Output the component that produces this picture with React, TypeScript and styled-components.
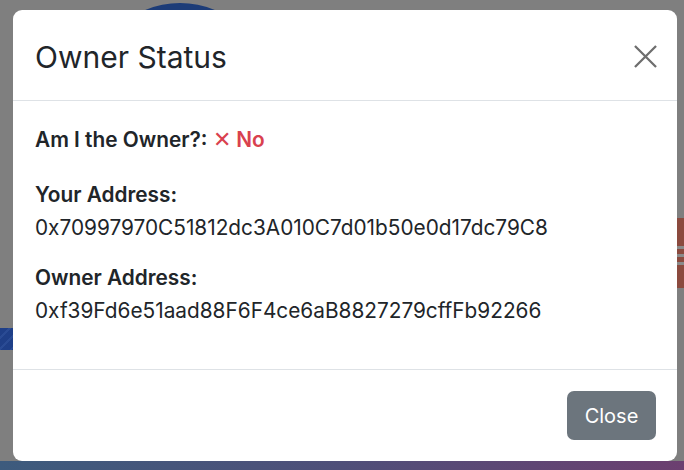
import React from "react";
import styled, { createGlobalStyle } from "styled-components";

const GlobalStyle = createGlobalStyle`
  html, body { margin: 0; padding: 0; }
  body {
    width: 684px;
    height: 470px;
    overflow: hidden;
    background: #7f7f7f;
    font-family: Inter, "Noto Sans", sans-serif;
  }
`;

const Page = styled.div`
  position: relative;
  width: 684px;
  height: 470px;
  overflow: hidden;
  background: #7f7f7f;
  display: flex;
  flex-direction: column;
`;

const TopArea = styled.div`
  height: 218px;
  display: flex;
  padding-left: 89px;
  padding-top: 3px;
  box-sizing: border-box;
`;

const Avatar = styled.div`
  width: 182px;
  height: 182px;
  border-radius: 50%;
  background: #1c3c78;
`;

const MiddleArea = styled.div`
  flex: 1;
  display: flex;
  justify-content: space-between;
`;

const LeftStrip = styled.div`
  width: 14px;
  height: 22px;
  margin-top: 110px;
  background: repeating-linear-gradient(135deg, #1f3f88 0 6px, #2a4b94 6px 8px);
`;

const RightStrip = styled.div`
  width: 8px;
  height: 70px;
  background: linear-gradient(
    to bottom,
    #8b4a3e 0 28px,
    #8a8a8a 28px 31px,
    #8b4a3e 31px 36px,
    #8a8a8a 36px 39px,
    #8b4a3e 39px 44px,
    #8a8a8a 44px 47px,
    #8b4a3e 47px 70px
  );
`;

const BottomBar = styled.div`
  height: 9px;
  background: linear-gradient(to right, #3d5b7d, #4f4f79 50%, #6c3f70);
`;

const Overlay = styled.div`
  position: absolute;
  inset: 0;
  padding: 10px 7px 9px 13px;
  box-sizing: border-box;
  display: flex;
`;

const Dialog = styled.div`
  flex: 1;
  display: flex;
  flex-direction: column;
  background: #ffffff;
  border-radius: 9px;
  color: #212529;
  overflow: hidden;
`;

const Header = styled.div`
  height: 91px;
  box-sizing: border-box;
  display: flex;
  align-items: center;
  justify-content: space-between;
  padding: 3px 20px 0 22px;
  border-bottom: 1px solid #dee2e6;
`;

const Title = styled.h5`
  margin: 0;
  font-size: 30px;
  font-weight: 400;
  line-height: 1.2;
  color: #212529;
`;

const CloseX = styled.button`
  width: 24px;
  height: 24px;
  padding: 0;
  border: 0;
  background: transparent;
  display: flex;
  align-items: center;
  justify-content: center;
  color: #6e6e6e;
`;

const Body = styled.div`
  flex: 1;
  padding: 22px 22px;
  font-size: 20.8px;
  line-height: 33px;
  display: flex;
  flex-direction: column;
  gap: 17px;
`;

const Row = styled.div<{ $spaced?: boolean }>`
  display: flex;
  flex-direction: column;
  margin-bottom: ${(p) => (p.$spaced ? "5px" : "0")};
`;

const Line = styled.div``;

const Label = styled.strong`
  font-weight: 600;
`;

const Status = styled.span<{ $ok: boolean }>`
  font-weight: 600;
  color: ${(p) => (p.$ok ? "#198754" : "#d9414e")};
`;

const Cross = styled.span`
  font-size: 22px;
  font-weight: 400;
  margin-right: 5px;
`;

const Footer = styled.div`
  height: 92px;
  box-sizing: border-box;
  border-top: 1px solid #dee2e6;
  display: flex;
  align-items: center;
  justify-content: flex-end;
  padding: 0 21px;
`;

const Button = styled.button`
  width: 89px;
  height: 49px;
  border: 0;
  border-radius: 7px;
  background: #6c757d;
  color: #ffffff;
  font-family: Inter, "Noto Sans", sans-serif;
  font-size: 20px;
`;

export default function App() {
  return (
    <>
      <GlobalStyle />
      <Page>
        <TopArea>
          <Avatar />
        </TopArea>
        <MiddleArea>
          <LeftStrip />
          <RightStrip />
        </MiddleArea>
        <BottomBar />
        <Overlay>
          <Dialog>
            <Header>
              <Title>Owner Status</Title>
              <CloseX aria-label="Close">
                <svg width="23" height="23" viewBox="0 0 24 24">
                  <path d="M1 1 L23 23 M23 1 L1 23" stroke="currentColor" strokeWidth="2.4" fill="none" />
                </svg>
              </CloseX>
            </Header>
            <Body>
              <Row $spaced>
                <Line>
                  <Label>Am I the Owner?:</Label>{" "}
                  <Status $ok={false}>
                    <Cross>✕</Cross>No
                  </Status>
                </Line>
              </Row>
              <Row>
                <Label>Your Address:</Label>
                <span>0x70997970C51812dc3A010C7d01b50e0d17dc79C8</span>
              </Row>
              <Row>
                <Label>Owner Address:</Label>
                <span>0xf39Fd6e51aad88F6F4ce6aB8827279cffFb92266</span>
              </Row>
            </Body>
            <Footer>
              <Button>Close</Button>
            </Footer>
          </Dialog>
        </Overlay>
      </Page>
    </>
  );
}
